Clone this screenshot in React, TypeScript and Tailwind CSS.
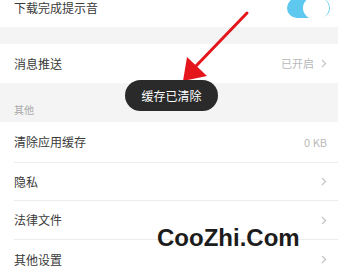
const font = "font-['Noto_Sans_CJK_SC',sans-serif]";

const Chevron = () => (
  <svg width="6" height="9" viewBox="0 0 6 9" className="ml-[7px]">
    <path d="M1 1l3.5 3.5L1 8" fill="none" stroke="#c4c4c4" strokeWidth="1.2" />
  </svg>
);

const Row = ({
  label,
  right,
  chevron,
  divider,
  h = "h-[39px]",
}: {
  label: string;
  right?: string;
  chevron?: boolean;
  divider?: boolean;
  h?: string;
}) => (
  <div className={`bg-white pl-[14px] ${h}`}>
    <div
      className={`flex h-full items-center pr-[11px] ${divider ? "border-b border-[#ededed]" : ""}`}
    >
      <span className="flex-1 text-[12px] text-[#3a3a3a]">{label}</span>
      {right && <span className="text-[11px] text-[#b9b9b9]">{right}</span>}
      {chevron && <Chevron />}
    </div>
  </div>
);

export default function App() {
  return (
    <div className={`relative h-[269px] w-[338px] overflow-hidden bg-white ${font}`}>
      <div className="-mt-[11px]">
        <div className="flex h-[38px] items-center bg-white pl-[14px] pr-[8px]">
          <span className="flex-1 text-[12px] text-[#3a3a3a]">下载完成提示音</span>
          <div className="flex h-[20px] w-[43px] items-center justify-end rounded-full bg-[#5ec8ef] pr-[1px]">
            <div className="h-[22px] w-[26px] rounded-full bg-white" />
          </div>
        </div>
        <div className="h-[17px] bg-[#f4f4f4]" />
        <Row label="消息推送" right="已开启" chevron />
        <div className="flex h-[39px] items-end bg-[#f4f4f4] pb-[5px] pl-[14px] text-[10px] text-[#a8a8a8]">
          其他
        </div>
        <Row label="清除应用缓存" right="0 KB" divider h="h-[41px]" />
        <Row label="隐私" chevron divider h="h-[38px]" />
        <Row label="法律文件" chevron divider />
        <Row label="其他设置" chevron />
      </div>

      <svg className="absolute left-0 top-0" width="338" height="269">
        <line x1="247" y1="13" x2="196" y2="66" stroke="#e4161c" strokeWidth="3" strokeLinecap="round" />
        <polygon points="183,81 187,57 207,76" fill="#e4161c" />
      </svg>

      <div className="absolute left-[125px] top-[80px] flex h-[31px] w-[93px] items-center justify-center rounded-full bg-[#2a2a2a] text-[12px] text-white">
        缓存已清除
      </div>

      <div className="absolute left-[157px] top-[224px] font-['Liberation_Sans',sans-serif] text-[24px] font-bold leading-[28px] text-[#1c1c1c]">
        CooZhi.Com
      </div>
    </div>
  );
}
